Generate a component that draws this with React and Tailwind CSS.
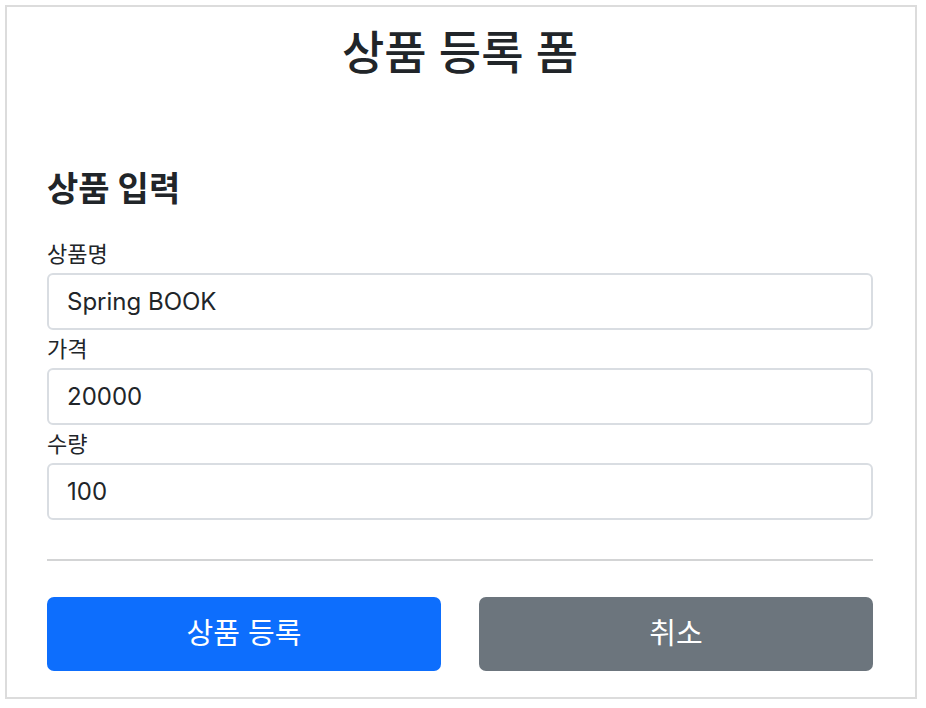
export default function App() {
  const groups = [
    { label: "상품명", value: "Spring BOOK" },
    { label: "가격", value: "20000" },
    { label: "수량", value: "100" },
  ];
  return (
    <div className="bg-white w-[926px] h-[708px] pt-[5px] pl-[5px] text-[#212529] font-['Inter','Noto_Sans_CJK_KR',sans-serif]">
      <div className="w-[912px] h-[694px] border-2 border-[#dcdcdc] pl-[40px] pr-[42px] flex flex-col">
        <h2 className="h-[90px] flex items-center justify-center text-[46px] font-medium leading-none">
          상품 등록 폼
        </h2>
        <h4 className="mt-[67px] h-[50px] flex items-center text-[34px] font-bold leading-none">
          상품 입력
        </h4>
        <div className="mt-[21px] flex flex-col">
          {groups.map((g) => (
            <div key={g.label} className="flex flex-col">
              <label className="h-[38px] flex items-center text-[22px] leading-none">
                {g.label}
              </label>
              <input
                readOnly
                value={g.value}
                className="h-[57px] w-full rounded-[6px] border-2 border-[#d9dde2] bg-white px-[18px] text-[24px] text-[#212529] outline-none"
              />
            </div>
          ))}
        </div>
        <div className="mt-[39px] h-[2px] bg-[#d3d4d5]" />
        <div className="mt-[36px] grid grid-cols-2 gap-[38px]">
          <button className="h-[74px] rounded-[7px] bg-[#0d6efd] text-white text-[29px] flex items-center justify-center">
            상품 등록
          </button>
          <button className="h-[74px] rounded-[7px] bg-[#6c757d] text-white text-[29px] flex items-center justify-center">
            취소
          </button>
        </div>
      </div>
    </div>
  );
}
